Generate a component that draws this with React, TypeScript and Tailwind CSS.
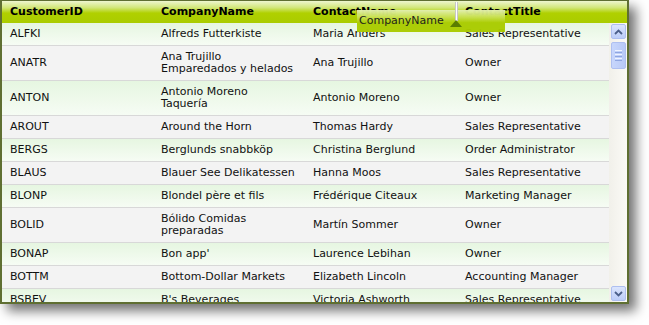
import React from "react";

type Row = { id: string; company: string[]; contact: string; title: string };

const rows: Row[] = [
  { id: "ALFKI", company: ["Alfreds Futterkiste"], contact: "Maria Anders", title: "Sales Representative" },
  { id: "ANATR", company: ["Ana Trujillo", "Emparedados y helados"], contact: "Ana Trujillo", title: "Owner" },
  { id: "ANTON", company: ["Antonio Moreno", "Taquería"], contact: "Antonio Moreno", title: "Owner" },
  { id: "AROUT", company: ["Around the Horn"], contact: "Thomas Hardy", title: "Sales Representative" },
  { id: "BERGS", company: ["Berglunds snabbköp"], contact: "Christina Berglund", title: "Order Administrator" },
  { id: "BLAUS", company: ["Blauer See Delikatessen"], contact: "Hanna Moos", title: "Sales Representative" },
  { id: "BLONP", company: ["Blondel père et fils"], contact: "Frédérique Citeaux", title: "Marketing Manager" },
  { id: "BOLID", company: ["Bólido Comidas", "preparadas"], contact: "Martín Sommer", title: "Owner" },
  { id: "BONAP", company: ["Bon app'"], contact: "Laurence Lebihan", title: "Owner" },
  { id: "BOTTM", company: ["Bottom-Dollar Markets"], contact: "Elizabeth Lincoln", title: "Accounting Manager" },
  { id: "BSBEV", company: ["B's Beverages"], contact: "Victoria Ashworth", title: "Sales Representative" },
];

const font = { fontFamily: '"DejaVu Sans", Verdana, sans-serif' };

function ScrollButton({ dir }: { dir: "up" | "down" }) {
  return (
    <div className="mx-auto flex h-[15px] w-[15px] items-center justify-center rounded-[2px] border border-[#aebff0] bg-gradient-to-b from-[#dbe5fd] to-[#bccdf8]">
      <svg width="9" height="6" viewBox="0 0 9 6">
        {dir === "up" ? (
          <path d="M1 5 L4.5 1.5 L8 5" fill="none" stroke="#4b5f8a" strokeWidth="1.8" />
        ) : (
          <path d="M1 1 L4.5 4.5 L8 1" fill="none" stroke="#4b5f8a" strokeWidth="1.8" />
        )}
      </svg>
    </div>
  );
}

export default function App() {
  return (
    <div className="h-[325px] w-[649px] bg-white" style={font}>
      <div className="relative h-[304px] w-[629px] border-2 border-t border-[#5f6f32] bg-white shadow-[7px_7px_11px_rgba(0,0,0,0.55)]">
        {/* column headers */}
        <div className="flex h-[22px] items-center pt-px bg-[linear-gradient(to_bottom,#eef6cf_0%,#d2e77a_30%,#b0d000_55%,#aacc00_100%)] text-[11px] font-bold text-black">
          <div className="w-[151px] pl-2">CustomerID</div>
          <div className="w-[152px] pl-2">CompanyName</div>
          <div className="w-[152px] pl-2">ContactName</div>
          <div className="flex-1 pl-2">ContactTitle</div>
        </div>

        <div className="flex h-[279px] overflow-hidden">
          {/* data rows */}
          <div className="w-[607px] text-[11px] leading-[12px] text-[#111]">
            {rows.map((r, i) => (
              <div
                key={r.id}
                className={
                  "flex items-center border-b border-[#d8d8d8] " +
                  (r.company.length > 1 ? "h-[35px] " : "h-[23px] ") +
                  (i % 2 === 0
                    ? "bg-[linear-gradient(to_bottom,#e6f6e1,#f6fcf4)]"
                    : "bg-[#f3f3f3]")
                }
              >
                <div className="w-[151px] whitespace-nowrap pl-2">{r.id}</div>
                <div className="w-[152px] whitespace-nowrap pl-2">
                  {r.company.map((line) => (
                    <div key={line}>{line}</div>
                  ))}
                </div>
                <div className="w-[152px] whitespace-nowrap pl-2">{r.contact}</div>
                <div className="flex-1 whitespace-nowrap pl-2">{r.title}</div>
              </div>
            ))}
          </div>

          {/* vertical scrollbar */}
          <div className="flex flex-1 flex-col justify-between bg-gradient-to-r from-[#f1f0ea] to-[#fbfaf6] py-px">
            <div className="flex flex-col gap-[3px]">
              <ScrollButton dir="up" />
              <div className="mx-auto flex h-[27px] w-[15px] items-center justify-center rounded-[2px] border border-[#aebff0] bg-gradient-to-r from-[#c7d6fc] to-[#b8c9f6]">
                <div className="flex flex-col gap-px">
                  <div className="h-px w-[7px] bg-[#eef3ff]" />
                  <div className="h-px w-[7px] bg-[#8ea5e0]" />
                  <div className="h-px w-[7px] bg-[#eef3ff]" />
                  <div className="h-px w-[7px] bg-[#8ea5e0]" />
                  <div className="h-px w-[7px] bg-[#eef3ff]" />
                  <div className="h-px w-[7px] bg-[#8ea5e0]" />
                </div>
              </div>
            </div>
            <ScrollButton dir="down" />
          </div>
        </div>

        {/* column being dragged */}
        <div className="absolute left-[355px] top-[9px] flex h-[22px] w-[148px] items-center bg-[linear-gradient(to_bottom,#e4f0b2_0%,#c6df4a_35%,#aacc00_60%,#aacc00_100%)] pl-[2px] pt-px text-[11px] text-[#1a1a1a] opacity-[0.97]">
          CompanyName
        </div>

        {/* drop position marker */}
        <div className="absolute left-[448px] top-[1px] flex flex-col items-center">
          <div className="h-[19px] w-[3px] border-x border-[#c8c8c8] bg-white" />
          <svg width="12" height="7" viewBox="0 0 12 7" className="-mt-[1px]">
            <path d="M6 0 L12 7 L0 7 Z" fill="#5a7d00" />
          </svg>
        </div>
      </div>
    </div>
  );
}
